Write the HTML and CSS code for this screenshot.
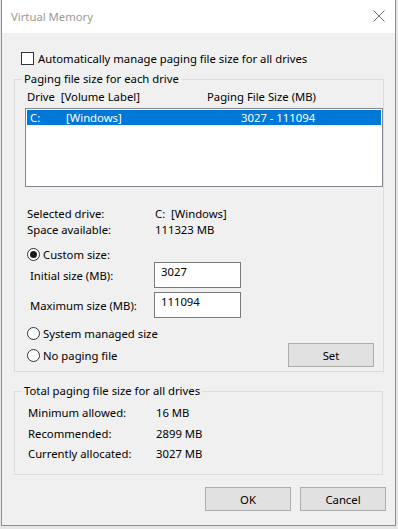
FILE: index.html
```html
<!DOCTYPE html>
<html lang="en">
<head>
    <meta charset="UTF-8">
    <title>Virtual Memory</title>
    <link rel="stylesheet" href="styles.css">
</head>
<body>
    <div class="window">
        <div class="titlebar">
            <span class="title">Virtual Memory</span>
            <svg class="close" width="12" height="12" viewBox="0 0 12 12">
                <path d="M0.5 0.5 L11.5 11.5 M11.5 0.5 L0.5 11.5" stroke="#6e6e6e" stroke-width="1" fill="none"/>
            </svg>
        </div>
        <div class="content">
            <label class="check-row">
                <span class="checkbox"></span>
                <span>Automatically manage paging file size for all drives</span>
            </label>

            <fieldset class="group group-drives">
                <legend>Paging file size for each drive</legend>
                <div class="list-head">
                    <span class="col-drive">Drive&nbsp; [Volume Label]</span>
                    <span class="col-size">Paging File Size (MB)</span>
                </div>
                <div class="listbox">
                    <div class="list-row selected">
                        <span class="col-letter">C:</span>
                        <span class="col-label">[Windows]</span>
                        <span class="col-value">3027 - 111094</span>
                    </div>
                </div>

                <div class="info">
                    <span>Selected drive:</span><span>C:&nbsp; [Windows]</span>
                    <span>Space available:</span><span>111323 MB</span>
                </div>

                <div class="radio-row radio-custom">
                    <span class="radio checked"></span>
                    <span>Custom size:</span>
                </div>
                <div class="field-row">
                    <span class="field-label">Initial size (MB):</span>
                    <input class="field" type="text" value="3027">
                </div>
                <div class="field-row">
                    <span class="field-label">Maximum size (MB):</span>
                    <input class="field" type="text" value="111094">
                </div>

                <div class="radio-row radio-system">
                    <span class="radio"></span>
                    <span>System managed size</span>
                </div>
                <div class="last-row">
                    <div class="radio-row">
                        <span class="radio"></span>
                        <span>No paging file</span>
                    </div>
                    <button class="btn btn-set">Set</button>
                </div>
            </fieldset>

            <fieldset class="group group-total">
                <legend>Total paging file size for all drives</legend>
                <div class="totals">
                    <span>Minimum allowed:</span><span>16 MB</span>
                    <span>Recommended:</span><span>2899 MB</span>
                    <span>Currently allocated:</span><span>3027 MB</span>
                </div>
            </fieldset>

            <div class="actions">
                <button class="btn">OK</button>
                <button class="btn">Cancel</button>
            </div>
        </div>
    </div>
</body>
</html>
```

FILE: styles.css
```css
body {
    margin: 0;
    padding: 0;
    background: #e6e6e6;
    font-family: 'Noto Sans', sans-serif;
    font-size: 11.3px;
    color: #000;
}
.window {
    margin-left: 1px;
    width: 393px;
    height: 525px;
    border: 1px solid #8f8f8f;
    border-top: none;
    background: #f0f0f0;
    display: flex;
    flex-direction: column;
}
.titlebar {
    height: 33px;
    background: #fff;
    display: flex;
    align-items: center;
    justify-content: space-between;
    padding: 0 9px 0 9px;
}
.title {
    color: #999;
    margin-top: -1px;
}
.close {
    margin-right: 1px;
    margin-top: -1px;
}
.content {
    padding: 16px 12px 0 12px;
}
.check-row {
    display: flex;
    align-items: center;
    gap: 4px;
    margin-left: 7px;
    height: 18px;
}
.checkbox {
    width: 11px;
    height: 11px;
    border: 1px solid #333;
    background: #fff;
}
.group {
    margin: 0;
    border: 1px solid #dcdcdc;
    padding: 0;
}
.group legend {
    padding: 0 2px;
    margin-left: 7px;
    line-height: 14px;
}
.group-drives {
    margin-top: 5px;
    height: 300px;
    box-sizing: border-box;
}
.list-head {
    display: flex;
    margin: 4px 0 0 12px;
    height: 14px;
    line-height: 14px;
}
.col-drive {
    width: 180px;
}
.listbox {
    margin: 4px 0 0 10px;
    width: 358px;
    height: 79px;
    border: 1px solid #828790;
    background: #fff;
    box-sizing: border-box;
    padding: 1px;
}
.list-row {
    display: flex;
    height: 15px;
    line-height: 15px;
}
.list-row.selected {
    background: #0078d7;
    color: #fff;
}
.col-letter {
    width: 36px;
    padding-left: 3px;
}
.col-label {
    width: 175px;
}
.info, .totals {
    display: grid;
    grid-template-columns: 128px auto;
    line-height: 16px;
}
.info {
    margin: 19px 0 0 12px;
}
.radio-row {
    display: flex;
    align-items: center;
    gap: 3px;
    height: 16px;
}
.group-drives > .radio-custom {
    margin: 8px 0 0 12px;
}
.radio {
    width: 11px;
    height: 11px;
    border: 1px solid #333;
    border-radius: 50%;
    background: #fff;
    display: flex;
    align-items: center;
    justify-content: center;
}
.radio.checked::after {
    content: "";
    width: 7px;
    height: 7px;
    border-radius: 50%;
    background: #1a1a1a;
}
.field-row {
    display: flex;
    align-items: center;
    margin: 0 0 0 15px;
}
.field-row + .field-row {
    margin-top: 4px;
}
.field-label {
    width: 124px;
}
.field {
    width: 87px;
    height: 26px;
    box-sizing: border-box;
    border: 1px solid #7a7a7a;
    background: #fff;
    font: inherit;
    padding: 0 0 7px 6px;
    margin: 0;
}
.group-drives > .radio-system {
    margin: 7px 0 0 12px;
}
.last-row {
    display: flex;
    align-items: center;
    justify-content: space-between;
    margin: 2px 9px 0 12px;
}
.btn {
    width: 86px;
    height: 24px;
    background: #e1e1e1;
    border: 1px solid #adadad;
    font: inherit;
    color: #000;
    padding: 0;
    margin: 0;
}
.group-total {
    margin-top: 12px;
    height: 91px;
    box-sizing: border-box;
}
.totals {
    margin: 5px 0 0 13px;
    line-height: 20.5px;
}
.actions {
    display: flex;
    justify-content: flex-end;
    gap: 9px;
    margin-top: 12px;
    margin-right: -3px;
}
```
